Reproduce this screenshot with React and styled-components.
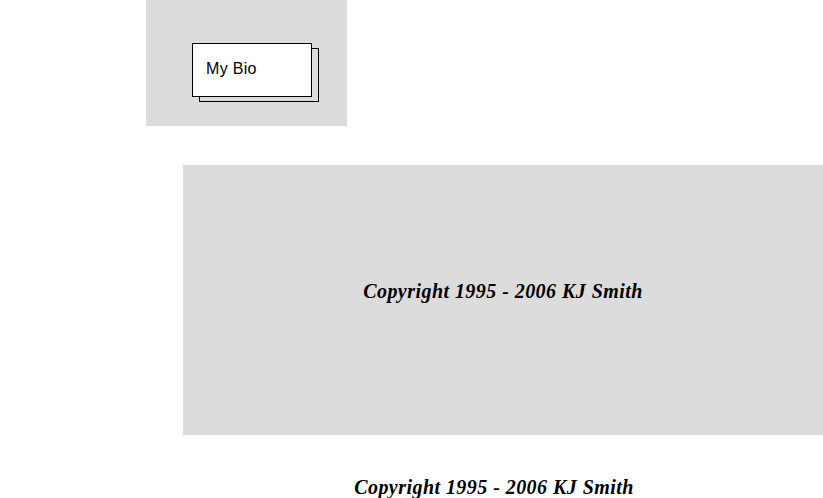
import styled, { createGlobalStyle } from 'styled-components';

const Global = createGlobalStyle`
body {
  margin: 0;
  background: #fff;
}
`;

const Page = styled.div`
display: flex;
flex-direction: column;
width: 823px;
`;

const TopPanel = styled.div`
margin-left: 146px;
width: 201px;
height: 126px;
background: #dcdcdc;
padding: 43px 0 0 46px;
box-sizing: border-box;
`;

const Card = styled.div`
width: 120px;
height: 54px;
box-sizing: border-box;
border: 1px solid #000;
background: #fff;
box-shadow: 7px 5px 0 -1px #dcdcdc, 7px 5px 0 0 #000;
display: flex;
align-items: center;
padding-left: 13px;
padding-bottom: 2px;
font-family: "Liberation Sans", Arial, sans-serif;
font-size: 16px;
letter-spacing: 0.3px;
color: #000;
`;

const MainPanel = styled.div`
margin: 39px 0 0 183px;
width: 640px;
height: 270px;
box-sizing: border-box;
padding-bottom: 18px;
background: #dcdcdc;
display: flex;
align-items: center;
justify-content: center;
`;

const Copyright = styled.div`
font-family: "Liberation Serif", "Times New Roman", serif;
font-weight: bold;
font-style: italic;
font-size: 20px;
line-height: 23px;
letter-spacing: 0.45px;
color: #000;
text-align: center;
margin-top: ${p => p.$top || 0}px;
padding-left: ${p => p.$left || 0}px;
`;

export default function App() {
  return (
    <Page>
      <Global />
      <TopPanel>
        <Card>My Bio</Card>
      </TopPanel>
      <MainPanel>
        <Copyright>Copyright 1995 - 2006 KJ Smith</Copyright>
      </MainPanel>
      <Copyright $top={41} $left={165}>Copyright 1995 - 2006 KJ Smith</Copyright>
    </Page>
  );
}
